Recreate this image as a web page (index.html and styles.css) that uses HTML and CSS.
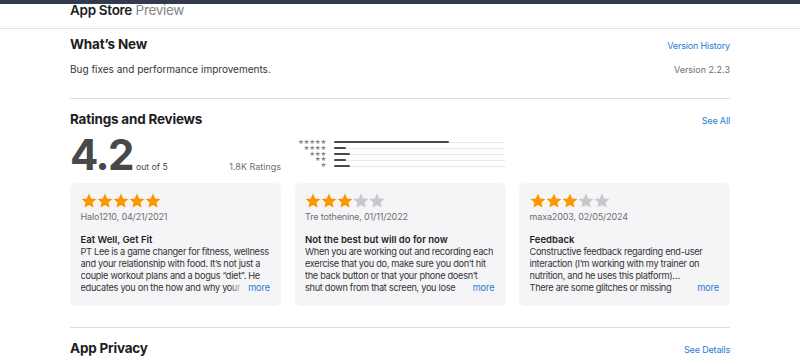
FILE: index.html
```html
<!DOCTYPE html>
<html lang="en">
<head>
<meta charset="utf-8">
<title>App Store Preview</title>
<link rel="stylesheet" href="styles.css">
</head>
<body>
<div class="topbar"></div>
<header class="header">
  <div class="brand"><span class="brand-strong">App Store</span> <span class="brand-light">Preview</span></div>
</header>
<main class="content">
  <section class="section whats-new">
    <div class="section-head">
      <h2 class="section-title">What’s New</h2>
      <a class="link" href="#">Version History</a>
    </div>
    <div class="whats-new-row">
      <p class="notes">Bug fixes and performance improvements.</p>
      <span class="version">Version 2.2.3</span>
    </div>
  </section>

  <section class="section ratings">
    <div class="section-head">
      <h2 class="section-title">Ratings and Reviews</h2>
      <a class="link" href="#">See All</a>
    </div>
    <div class="rating-row">
      <div class="score-block">
        <div class="score"><span class="score-num">4.2</span><span class="score-out">out of 5</span></div>
        <div class="count">1.8K Ratings</div>
      </div>
      <div class="histogram">
        <div class="hist-row"><span class="hist-stars">★★★★★</span><span class="hist-track"><span class="hist-fill" style="width:67%"></span></span></div>
        <div class="hist-row"><span class="hist-stars">★★★★</span><span class="hist-track"><span class="hist-fill" style="width:7%"></span></span></div>
        <div class="hist-row"><span class="hist-stars">★★★</span><span class="hist-track"><span class="hist-fill" style="width:9.5%"></span></span></div>
        <div class="hist-row"><span class="hist-stars">★★</span><span class="hist-track"><span class="hist-fill" style="width:7%"></span></span></div>
        <div class="hist-row"><span class="hist-stars">★</span><span class="hist-track"><span class="hist-fill" style="width:9.5%"></span></span></div>
      </div>
    </div>

    <div class="cards">
      <article class="card">
        <div class="stars">
          <svg class="star on" viewBox="0 0 16 16"><polygon points="8,0.6 10.2,5.4 15.4,5.9 11.5,9.4 12.6,14.6 8,11.9 3.4,14.6 4.5,9.4 0.6,5.9 5.8,5.4"/></svg>
          <svg class="star on" viewBox="0 0 16 16"><polygon points="8,0.6 10.2,5.4 15.4,5.9 11.5,9.4 12.6,14.6 8,11.9 3.4,14.6 4.5,9.4 0.6,5.9 5.8,5.4"/></svg>
          <svg class="star on" viewBox="0 0 16 16"><polygon points="8,0.6 10.2,5.4 15.4,5.9 11.5,9.4 12.6,14.6 8,11.9 3.4,14.6 4.5,9.4 0.6,5.9 5.8,5.4"/></svg>
          <svg class="star on" viewBox="0 0 16 16"><polygon points="8,0.6 10.2,5.4 15.4,5.9 11.5,9.4 12.6,14.6 8,11.9 3.4,14.6 4.5,9.4 0.6,5.9 5.8,5.4"/></svg>
          <svg class="star on" viewBox="0 0 16 16"><polygon points="8,0.6 10.2,5.4 15.4,5.9 11.5,9.4 12.6,14.6 8,11.9 3.4,14.6 4.5,9.4 0.6,5.9 5.8,5.4"/></svg>
        </div>
        <div class="author">Halo1210, 04/21/2021</div>
        <h3 class="review-title">Eat Well, Get Fit</h3>
        <div class="review-body">
          <p class="review-text">PT Lee is a game changer for fitness, wellness and your relationship with food. It’s not just a couple workout plans and a bogus “diet”. He educates you on the how and why your body responds the way it does to food and exercise.</p>
          <a class="more" href="#">more</a>
        </div>
      </article>

      <article class="card">
        <div class="stars">
          <svg class="star on" viewBox="0 0 16 16"><polygon points="8,0.6 10.2,5.4 15.4,5.9 11.5,9.4 12.6,14.6 8,11.9 3.4,14.6 4.5,9.4 0.6,5.9 5.8,5.4"/></svg>
          <svg class="star on" viewBox="0 0 16 16"><polygon points="8,0.6 10.2,5.4 15.4,5.9 11.5,9.4 12.6,14.6 8,11.9 3.4,14.6 4.5,9.4 0.6,5.9 5.8,5.4"/></svg>
          <svg class="star on" viewBox="0 0 16 16"><polygon points="8,0.6 10.2,5.4 15.4,5.9 11.5,9.4 12.6,14.6 8,11.9 3.4,14.6 4.5,9.4 0.6,5.9 5.8,5.4"/></svg>
          <svg class="star off" viewBox="0 0 16 16"><polygon points="8,0.6 10.2,5.4 15.4,5.9 11.5,9.4 12.6,14.6 8,11.9 3.4,14.6 4.5,9.4 0.6,5.9 5.8,5.4"/></svg>
          <svg class="star off" viewBox="0 0 16 16"><polygon points="8,0.6 10.2,5.4 15.4,5.9 11.5,9.4 12.6,14.6 8,11.9 3.4,14.6 4.5,9.4 0.6,5.9 5.8,5.4"/></svg>
        </div>
        <div class="author">Tre tothenine, 01/11/2022</div>
        <h3 class="review-title">Not the best but will do for now</h3>
        <div class="review-body">
          <p class="review-text">When you are working out and recording each exercise that you do, make sure you don’t hit the back button or that your phone doesn’t shut down from that screen, you lose everything you recorded.</p>
          <a class="more" href="#">more</a>
        </div>
      </article>

      <article class="card">
        <div class="stars">
          <svg class="star on" viewBox="0 0 16 16"><polygon points="8,0.6 10.2,5.4 15.4,5.9 11.5,9.4 12.6,14.6 8,11.9 3.4,14.6 4.5,9.4 0.6,5.9 5.8,5.4"/></svg>
          <svg class="star on" viewBox="0 0 16 16"><polygon points="8,0.6 10.2,5.4 15.4,5.9 11.5,9.4 12.6,14.6 8,11.9 3.4,14.6 4.5,9.4 0.6,5.9 5.8,5.4"/></svg>
          <svg class="star on" viewBox="0 0 16 16"><polygon points="8,0.6 10.2,5.4 15.4,5.9 11.5,9.4 12.6,14.6 8,11.9 3.4,14.6 4.5,9.4 0.6,5.9 5.8,5.4"/></svg>
          <svg class="star off" viewBox="0 0 16 16"><polygon points="8,0.6 10.2,5.4 15.4,5.9 11.5,9.4 12.6,14.6 8,11.9 3.4,14.6 4.5,9.4 0.6,5.9 5.8,5.4"/></svg>
          <svg class="star off" viewBox="0 0 16 16"><polygon points="8,0.6 10.2,5.4 15.4,5.9 11.5,9.4 12.6,14.6 8,11.9 3.4,14.6 4.5,9.4 0.6,5.9 5.8,5.4"/></svg>
        </div>
        <div class="author">maxa2003, 02/05/2024</div>
        <h3 class="review-title">Feedback</h3>
        <div class="review-body">
          <p class="review-text">Constructive feedback regarding end-user interaction (I’m working with my trainer on nutrition, and he uses this platform)…<br>There are some glitches or missing functionality that would make logging easier.</p>
          <a class="more" href="#">more</a>
        </div>
      </article>
    </div>
  </section>

  <section class="section privacy">
    <div class="section-head">
      <h2 class="section-title">App Privacy</h2>
      <a class="link" href="#">See Details</a>
    </div>
  </section>
</main>
</body>
</html>
```

FILE: styles.css
```css
* { box-sizing: border-box; }

html, body {
  margin: 0;
  padding: 0;
  background: #ffffff;
  font-family: Inter, "Noto Sans", "Liberation Sans", sans-serif;
  color: #1d1d1f;
  overflow: hidden;
}

.topbar {
  height: 4px;
  background: #343a4e;
}

.header {
  height: 25px;
  border-bottom: 1px solid #e3e3e5;
  padding-left: 70px;
}

.brand {
  font-size: 13.5px;
  line-height: 12px;
  letter-spacing: -0.3px;
}

.brand-strong { font-weight: 600; color: #1d1d1f; }
.brand-light { font-weight: 400; color: #86868b; }

.content {
  width: 660px;
  margin-left: 70px;
}

.section {
  border-bottom: 1px solid #dcdcde;
}

.section:last-child { border-bottom: none; }

.section-head {
  display: flex;
  justify-content: space-between;
  align-items: baseline;
}

.section-title {
  margin: 0;
  font-size: 13.5px;
  line-height: 18px;
  font-weight: 700;
  letter-spacing: -0.2px;
  color: #1d1d1f;
}

.link {
  font-size: 9px;
  letter-spacing: -0.15px;
  color: #1f7bd3;
  text-decoration: none;
}

.whats-new {
  padding-top: 6px;
  padding-bottom: 22px;
}

.whats-new-row {
  display: flex;
  justify-content: space-between;
  align-items: baseline;
  margin-top: 10px;
  line-height: 12px;
}

.notes {
  margin: 0;
  font-size: 10px;
  color: #333336;
}

.version {
  font-size: 9px;
  color: #6e6e73;
}

.ratings {
  padding-top: 11px;
  padding-bottom: 21px;
}

.rating-row {
  display: flex;
  align-items: flex-start;
  margin-top: 5px;
  height: 44px;
}

.score-block {
  width: 211px;
  display: flex;
  justify-content: space-between;
  align-items: baseline;
}

.score {
  display: flex;
  align-items: baseline;
}

.score-num {
  font-size: 42px;
  line-height: 44px;
  font-weight: 700;
  letter-spacing: -1.5px;
  color: #48484c;
}

.score-out {
  margin-left: 3px;
  font-size: 8.7px;
  color: #48484c;
}

.count {
  font-size: 9px;
  color: #6e6e73;
}

.histogram {
  margin-left: 12px;
  margin-top: 7px;
  display: flex;
  flex-direction: column;
}

.hist-row {
  display: flex;
  align-items: center;
  height: 5.8px;
}

.hist-stars {
  width: 33px;
  text-align: right;
  font-family: "DejaVu Sans", sans-serif;
  font-size: 6.6px;
  line-height: 5.8px;
  letter-spacing: -0.3px;
  color: #8a8a8e;
}

.hist-track {
  position: relative;
  margin-left: 8px;
  width: 171px;
  height: 1px;
  background: #e8e8ea;
}

.hist-fill {
  position: absolute;
  left: 0;
  top: -1px;
  height: 2px;
  background: #4a4a4e;
  border-radius: 1px;
}

.cards {
  margin-top: 6px;
  display: grid;
  grid-template-columns: repeat(3, 1fr);
  gap: 13.5px;
}

.card {
  height: 123px;
  background: #f5f5f7;
  border-radius: 6px;
  padding: 9.5px 11px 0 10.5px;
}

.stars {
  display: flex;
  height: 16px;
}

.star {
  width: 16px;
  height: 16px;
}

.star.on { fill: #ff9500; }
.star.off { fill: #c7c7cc; }

.author {
  margin-top: 2.5px;
  font-size: 9px;
  letter-spacing: -0.15px;
  line-height: 12px;
  color: #6e6e73;
}

.review-title {
  margin: 11px 0 0 0;
  font-size: 9.5px;
  line-height: 12px;
  font-weight: 600;
  color: #1d1d1f;
}

.review-body {
  position: relative;
  height: 48px;
  overflow: hidden;
}

.review-text {
  margin: 0;
  font-size: 9.2px;
  letter-spacing: -0.3px;
  line-height: 12px;
  color: #333336;
}

.more {
  position: absolute;
  right: 0;
  bottom: 0;
  padding-left: 18px;
  font-size: 9.2px;
  letter-spacing: -0.1px;
  line-height: 12px;
  color: #1f7bd3;
  text-decoration: none;
  background: linear-gradient(to right, rgba(245,245,247,0), #f5f5f7 14px);
}

.privacy {
  padding-top: 11px;
}
```
